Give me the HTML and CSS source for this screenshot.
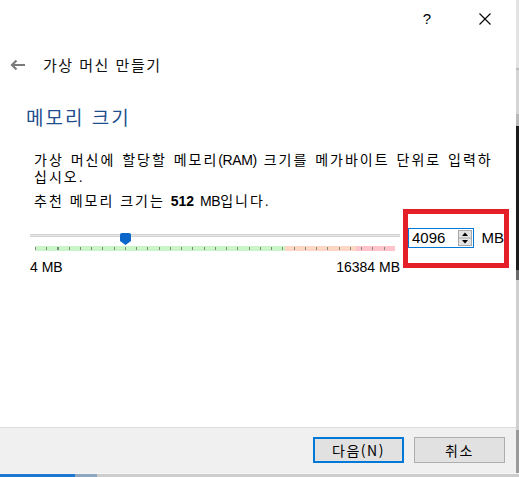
FILE: index.html
```html
<!DOCTYPE html>
<html lang="ko">
<head>
<meta charset="utf-8">
<title>가상 머신 만들기</title>
<link rel="stylesheet" href="styles.css">
</head>
<body>
<div class="screen">
  <div class="window">
    <div class="dialog">
      <div class="titlebar">
        <span class="tb-btn help">?</span>
        <span class="tb-btn close">
          <svg width="12" height="12" viewBox="0 0 12 12"><path d="M0.5 0.5L11.5 11.5M11.5 0.5L0.5 11.5" stroke="#000" stroke-width="1.1" fill="none"/></svg>
        </span>
      </div>
      <div class="header">
        <svg class="back" width="16" height="12" viewBox="0 0 16 12"><path d="M15 6H2.5M6.5 1.5L2 6L6.5 10.5" stroke="#7b7b7b" stroke-width="2.2" fill="none"/></svg>
        <span class="header-title">가상 머신 만들기</span>
      </div>
      <div class="content">
        <h1 class="page-title">메모리 크기</h1>
        <p class="desc">가상 머신에 할당할 메모리<span class="latin">(RAM)</span> 크기를 메가바이트 단위로 입력하십시오.</p>
        <p class="recommend">추천 메모리 크기는 <b>512</b> <span class="latin">MB</span>입니다.</p>
        <div class="slider-row">
          <div class="slider">
            <div class="track"></div>
            <svg class="thumb" width="11" height="12" viewBox="0 0 11 12"><path d="M0 2Q0 0 2 0H9Q11 0 11 2V8L5.5 12L0 8Z" fill="#0a66c9"/></svg>
            <div class="ticks"></div>
            <div class="scale"><span>4 MB</span><span>16384 MB</span></div>
          </div>
          <div class="mark">
            <div class="spinbox">
              <span class="spin-value">4096</span>
              <svg class="spin-arrows" width="14" height="16" viewBox="0 0 14 16">
                <rect x="0.5" y="0.5" width="13" height="15" fill="#e3e3e3" stroke="#a8a8a8"/>
                <line x1="1" y1="8" x2="13" y2="8" stroke="#a8a8a8"/>
                <path d="M4 6H10L7 2.5Z" fill="#000"/>
                <path d="M4 10H10L7 13.5Z" fill="#000"/>
              </svg>
            </div>
            <span class="unit">MB</span>
          </div>
        </div>
      </div>
      <div class="footer">
        <button class="btn primary">다음(N)</button>
        <button class="btn">취소</button>
      </div>
    </div>
    <div class="edge"></div>
  </div>
  <div class="taskbar"></div>
</div>
</body>
</html>
```
FILE: styles.css
```css
* { box-sizing: border-box; }
html, body { margin: 0; padding: 0; }
body {
  width: 519px;
  height: 477px;
  overflow: hidden;
  font-family: "Liberation Sans", "Noto Sans CJK KR", sans-serif;
  color: #000;
  background: #fff;
}
.screen { display: flex; flex-direction: column; width: 519px; height: 477px; }
.window { display: flex; flex-direction: row; height: 473px; }
.dialog {
  width: 516px;
  display: flex;
  flex-direction: column;
  background: #fff;
}
.edge {
  width: 3px;
  background: linear-gradient(to bottom, #e2e2e2 0 68px, #bdbdbd 68px 70px, #d4d4d4 70px 114px, #b8b8b8 114px 126px, #1c1c1c 126px 270px, #6a6a6a 270px 280px, #cfcfcf 280px 430px, #9a9a9a 430px 473px);
}
.taskbar {
  height: 4px;
  border-top: 1px solid #f4f4f4;
  background: linear-gradient(to right, #1f78cf 0 75px, #8ea7bf 75px 97px, #cdcdcd 97px);
}

.titlebar {
  height: 36px;
  display: flex;
  justify-content: flex-end;
  align-items: center;
  gap: 11px;
  padding-right: 8px;
}
.tb-btn {
  width: 46px;
  height: 36px;
  display: flex;
  align-items: center;
  justify-content: center;
}
.help { font-size: 15px; font-family: "Liberation Sans", sans-serif; padding-right: 2px; }
.close svg { display: block; margin-top: 1px; }

.header {
  height: 20px;
  margin-top: 19px;
  padding-left: 10px;
  display: flex;
  align-items: center;
}
.back { display: block; }
.header-title {
  margin-left: 17px;
  font-family: "Noto Sans CJK KR", sans-serif;
  font-size: 15px;
  line-height: 20px;
  letter-spacing: 1.5px;
  color: #111;
}

.content { flex: 1; padding-left: 26px; }
.page-title {
  margin: 29px 0 0 0;
  font-family: "Noto Sans CJK KR", sans-serif;
  font-weight: normal;
  font-size: 19px;
  line-height: 26px;
  letter-spacing: 2px;
  color: #1f4f8e;
}
.desc {
  margin: 22px 0 0 0;
  padding-left: 8px;
  width: 479px;
  font-size: 14px;
  line-height: 17px;
  letter-spacing: 2px;
  word-spacing: 1px;
}
.latin { letter-spacing: -0.4px; }
.recommend {
  margin: 7px 0 0 0;
  padding-left: 8px;
  font-size: 14px;
  line-height: 16px;
  letter-spacing: 2px;
  word-spacing: 0;
}
.recommend b { letter-spacing: 0; }

.slider-row {
  display: flex;
  align-items: flex-start;
  gap: 3px;
}
.slider {
  position: relative;
  width: 370px;
  margin-left: 4px;
}
.track {
  margin-top: 25px;
  height: 3px;
  background: #e6e6e6;
  border-top: 1px solid #d4d4d4;
  border-bottom: 1px solid #d4d4d4;
}
.thumb { position: absolute; left: 90px; top: 24px; display: block; }
.ticks {
  margin: 9px 5px 0 5px;
  height: 5px;
  background:
    repeating-linear-gradient(to right, #7f8a7f 0 1px, transparent 1px 11.25px) 0 1px / 100% 3px no-repeat,
    linear-gradient(to right, #c9f5c9 0 250px, #ffd5c3 250px 321px, #ffc3cb 321px);
}
.scale {
  margin-top: 8px;
  display: flex;
  justify-content: space-between;
  font-size: 14px;
  line-height: 16px;
}
.mark {
  width: 106px;
  height: 59px;
  border: 5px solid #e41f28;
  padding-top: 14px;
  display: flex;
  align-items: flex-start;
  gap: 8px;
}
.spinbox {
  width: 66px;
  height: 20px;
  border: 1px solid #0078d7;
  display: flex;
  align-items: center;
  justify-content: space-between;
  padding: 0 1px 0 3px;
}
.spin-value { font-size: 15px; line-height: 18px; }
.spin-arrows { display: block; }
.unit { font-size: 15px; line-height: 20px; }

.footer {
  height: 46px;
  background: #f0f0f0;
  border-top: 1px solid #dcdcdc;
  display: flex;
  justify-content: flex-end;
  align-items: flex-start;
  gap: 10px;
  padding: 9px 11px 0 0;
}
.btn {
  width: 91px;
  height: 26px;
  background: #e1e1e1;
  border: 1px solid #adadad;
  font-family: "Noto Sans CJK KR", sans-serif;
  font-size: 14px;
  line-height: 20px;
  color: #000;
  padding: 0;
  letter-spacing: 1.5px;
}
.btn.primary { border: 2px solid #0078d7; }
```
